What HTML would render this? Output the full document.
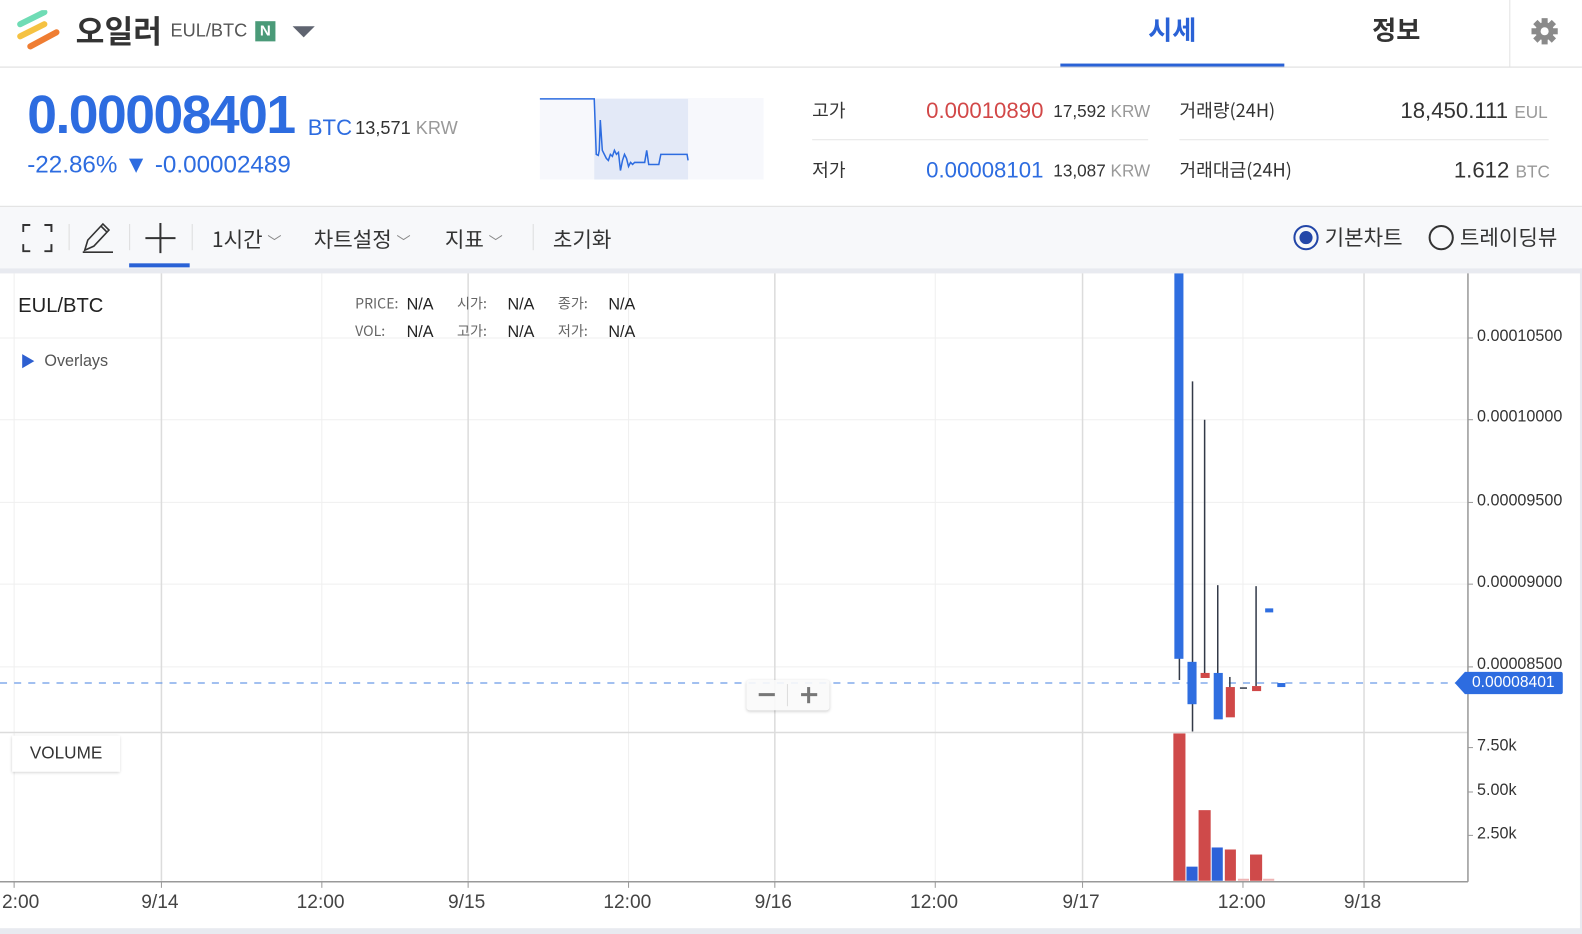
<!DOCTYPE html>
<html><head><meta charset="utf-8"><style>
*{margin:0;padding:0;box-sizing:border-box}
body{width:1582px;height:934px;overflow:hidden;background:#e8eaf0;font-family:"Liberation Sans","Noto Sans CJK KR",sans-serif;color:#333;position:relative}
#w{position:absolute;left:0;top:0;width:1568px;height:926px;transform:scale(1.0089);transform-origin:0 0;background:#fff}
.a{position:absolute;white-space:nowrap}
.k{font-family:"Noto Sans CJK KR","Liberation Sans",sans-serif}
</style></head><body><div id="w">
<svg class="a" style="left:14px;top:10px" width="48" height="44" viewBox="0 0 48 44">
<line x1="6" y1="14" x2="30" y2="2" stroke="#6fdcb5" stroke-width="6" stroke-linecap="round"/>
<line x1="6" y1="26" x2="30" y2="14" stroke="#f5c242" stroke-width="6" stroke-linecap="round"/>
<line x1="16" y1="36" x2="42" y2="22" stroke="#ef7d32" stroke-width="6" stroke-linecap="round"/>
</svg>
<div class="a k" style="left:75px;top:6px;font-size:31px;font-weight:bold;color:#333">오일러</div>
<div class="a" style="left:169px;top:20px;font-size:18px;color:#555">EUL/BTC</div>
<div class="a" style="left:253px;top:21px;width:20px;height:20px;background:#4a9a78;color:#fff;font-size:15px;font-weight:bold;text-align:center;line-height:20px">N</div>
<div class="a" style="left:290px;top:26px;width:0;height:0;border-left:11px solid transparent;border-right:11px solid transparent;border-top:11px solid #5f6470"></div>
<div class="a k" style="left:1138px;top:10px;font-size:26px;font-weight:bold;color:#2a62d6">시세</div>
<div class="a" style="left:1051px;top:63px;width:222px;height:4px;background:#2a62d6"></div>
<div class="a k" style="left:1360px;top:10px;font-size:26px;font-weight:bold;color:#333">정보</div>
<div class="a" style="left:1496px;top:0;width:1px;height:66px;background:#e2e2e2"></div>
<svg class="a" style="left:1517px;top:17px" width="28" height="28" viewBox="0 0 28 28"><g fill="#8a8a8a"><circle cx="14" cy="14" r="9"/><g><rect x="11" y="1" width="6" height="26"/><rect x="11" y="1" width="6" height="26" transform="rotate(45 14 14)"/><rect x="11" y="1" width="6" height="26" transform="rotate(90 14 14)"/><rect x="11" y="1" width="6" height="26" transform="rotate(135 14 14)"/></g></g><circle cx="14" cy="14" r="4" fill="#fff"/></svg>
<div class="a" style="left:0;top:66px;width:1568px;height:1px;background:#dcdcdc"></div>
<div class="a" style="left:27px;top:84px;font-size:53px;font-weight:bold;color:#2d6ce0;letter-spacing:-1.5px">0.00008401</div>
<div class="a" style="left:305px;top:114px;font-size:22px;color:#2d6ce0">BTC</div>
<div class="a" style="left:352px;top:117px;font-size:18px;color:#333">13,571 <span style="color:#999">KRW</span></div>
<div class="a" style="left:27px;top:150px;font-size:24px;color:#2d6ce0">-22.86% ▼ -0.00002489</div>
<svg class="a" style="left:535px;top:97px" width="222" height="81">
<rect width="222" height="81" fill="#f7f8fc"/>
<rect x="54" y="1" width="93" height="80" fill="#e3e9f7"/>
<polyline fill="none" stroke="#2d6ce0" stroke-width="1.5" points="0,1 54,1 56,56 58,57 59,52 60,22 62,52 66,60 68,62 70,56 72,58 74,52 76,56 78,54 80,72 82,62 84,56 86,60 88,68 90,64 92,66 94,64 104,64 106,52 108,66 118,66 120,56 136,56 146,56 147,62"/>
</svg>
<div class="a k" style="left:805px;top:96px;font-size:18px;color:#333">고가</div>
<div class="a" style="left:918px;top:97px;font-size:22px;color:#d24848">0.00010890</div>
<div class="a" style="left:1044px;top:101px;font-size:17px;color:#333">17,592 <span style="color:#999">KRW</span></div>
<div class="a" style="left:805px;top:138px;width:333px;height:1px;background:#e5e5e5"></div>
<div class="a k" style="left:805px;top:155px;font-size:18px;color:#333">저가</div>
<div class="a" style="left:918px;top:156px;font-size:22px;color:#2d6ce0">0.00008101</div>
<div class="a" style="left:1044px;top:160px;font-size:17px;color:#333">13,087 <span style="color:#999">KRW</span></div>
<div class="a k" style="left:1169px;top:96px;font-size:18px;color:#333">거래량(24H)</div>
<div class="a" style="left:1388px;top:97px;font-size:22px;color:#333">18,450.111 <span style="font-size:17px;color:#999">EUL</span></div>
<div class="a" style="left:1169px;top:138px;width:366px;height:1px;background:#e5e5e5"></div>
<div class="a k" style="left:1169px;top:155px;font-size:18px;color:#333">거래대금(24H)</div>
<div class="a" style="left:1441px;top:156px;font-size:22px;color:#333">1.612 <span style="font-size:17px;color:#999">BTC</span></div>
<div class="a" style="left:0;top:204px;width:1568px;height:62px;background:#f7f8fa;border-top:1px solid #e0e0e0"></div>
<svg class="a" style="left:22px;top:222px" width="30" height="28" fill="none" stroke="#333" stroke-width="2"><path d="M1 8V1h7M22 1h7v7M29 20v7h-7M8 27H1v-7"/></svg>
<div class="a" style="left:68px;top:222px;width:1px;height:26px;background:#ddd"></div>
<svg class="a" style="left:80px;top:218px" width="36" height="34" fill="none" stroke="#333" stroke-width="1.6"><path d="M4 30L7 20 22 4 28 10 13 26 4 30ZM20 6l6 6M2 32h30"/></svg>
<div class="a" style="left:128px;top:222px;width:1px;height:26px;background:#ddd"></div>
<svg class="a" style="left:144px;top:221px" width="30" height="30" stroke="#333" stroke-width="2"><path d="M15 0v30M0 15h30"/></svg>
<div class="a" style="left:128px;top:261px;width:60px;height:4px;background:#2a62d6"></div>
<div class="a" style="left:190px;top:222px;width:1px;height:26px;background:#ddd"></div>
<div class="a k" style="left:210px;top:222px;font-size:21px;color:#333">1시간 <span style="font-size:14px;color:#888">﹀</span></div>
<div class="a k" style="left:311px;top:222px;font-size:21px;color:#333">차트설정 <span style="font-size:14px;color:#888">﹀</span></div>
<div class="a k" style="left:441px;top:222px;font-size:21px;color:#333">지표 <span style="font-size:14px;color:#888">﹀</span></div>
<div class="a" style="left:528px;top:222px;width:1px;height:26px;background:#ddd"></div>
<div class="a k" style="left:548px;top:222px;font-size:21px;color:#333">초기화</div>
<div class="a" style="left:1282px;top:223px;width:25px;height:25px;border:2px solid #2346a8;border-radius:50%"></div>
<div class="a" style="left:1288px;top:229px;width:13px;height:13px;background:#2346a8;border-radius:50%"></div>
<div class="a k" style="left:1313px;top:220px;font-size:21px;color:#333">기본차트</div>
<div class="a" style="left:1416px;top:223px;width:25px;height:25px;border:2px solid #333;border-radius:50%"></div>
<div class="a k" style="left:1447px;top:220px;font-size:21px;color:#333">트레이딩뷰</div>
<div class="a" style="left:0;top:266px;width:1568px;height:5px;background:#e8eaf0"></div>
<div class="a" style="left:1566px;top:266px;width:2px;height:660px;background:#e8eaf0"></div>
<div class="a" style="left:0;top:920px;width:1568px;height:6px;background:#e8eaf0"></div>
<svg class="a" style="left:0;top:0" width="1566" height="920">
<g stroke="#efefef" stroke-width="1">
<line x1="0" y1="335" x2="1455" y2="335"/><line x1="0" y1="416" x2="1455" y2="416"/><line x1="0" y1="498" x2="1455" y2="498"/><line x1="0" y1="579" x2="1455" y2="579"/><line x1="0" y1="661" x2="1455" y2="661"/>
<line x1="14" y1="271" x2="14" y2="873"/><line x1="319" y1="271" x2="319" y2="873"/><line x1="623" y1="271" x2="623" y2="873"/><line x1="927" y1="271" x2="927" y2="873"/><line x1="1232" y1="271" x2="1232" y2="873"/>
</g>
<g stroke="#dcdcdc" stroke-width="1.5">
<line x1="160" y1="271" x2="160" y2="873"/><line x1="464" y1="271" x2="464" y2="873"/><line x1="768" y1="271" x2="768" y2="873"/><line x1="1073" y1="271" x2="1073" y2="873"/><line x1="1352" y1="271" x2="1352" y2="873"/>
<line x1="0" y1="726" x2="1455" y2="726"/>
</g>
<g stroke="#999" stroke-width="1.5"><line x1="1455" y1="271" x2="1455" y2="874"/><line x1="0" y1="874" x2="1455" y2="874"/></g>
<g stroke="#999" stroke-width="1"><line x1="1455" y1="335" x2="1460" y2="335"/><line x1="1455" y1="416" x2="1460" y2="416"/><line x1="1455" y1="498" x2="1460" y2="498"/><line x1="1455" y1="579" x2="1460" y2="579"/><line x1="1455" y1="661" x2="1460" y2="661"/><line x1="1455" y1="741" x2="1460" y2="741"/><line x1="1455" y1="785" x2="1460" y2="785"/><line x1="1455" y1="828" x2="1460" y2="828"/>
<line x1="14" y1="874" x2="14" y2="880"/><line x1="160" y1="874" x2="160" y2="880"/><line x1="319" y1="874" x2="319" y2="880"/><line x1="464" y1="874" x2="464" y2="880"/><line x1="623" y1="874" x2="623" y2="880"/><line x1="768" y1="874" x2="768" y2="880"/><line x1="927" y1="874" x2="927" y2="880"/><line x1="1073" y1="874" x2="1073" y2="880"/><line x1="1232" y1="874" x2="1232" y2="880"/><line x1="1352" y1="874" x2="1352" y2="880"/></g>
<line x1="0" y1="677" x2="1445" y2="677" stroke="#6b9be8" stroke-width="1.3" stroke-dasharray="7,7"/>
<g stroke="#333a48" stroke-width="1.5">
<line x1="1169" y1="640" x2="1169" y2="674"/><line x1="1182" y1="378" x2="1182" y2="725"/><line x1="1194" y1="416" x2="1194" y2="668"/><line x1="1207" y1="580" x2="1207" y2="668"/><line x1="1219" y1="671" x2="1219" y2="683"/><line x1="1229" y1="682" x2="1236" y2="682"/><line x1="1245" y1="581" x2="1245" y2="680"/></g>
<g fill="#2f6ee0"><rect x="1164" y="271" width="9" height="382"/><rect x="1177" y="656" width="9" height="42"/><rect x="1203" y="667" width="9" height="46"/><rect x="1254" y="603" width="8" height="4"/><rect x="1266" y="677" width="8" height="4"/></g>
<g fill="#d04848"><rect x="1190" y="667" width="9" height="5"/><rect x="1215" y="681" width="9" height="30"/><rect x="1241" y="680" width="9" height="5"/></g>
<g fill="#cf4a4a"><rect x="1163" y="727" width="12" height="146"/><rect x="1188" y="803" width="12" height="70"/><rect x="1214" y="842" width="11" height="31"/><rect x="1239" y="847" width="12" height="26"/></g>
<g fill="#2d62d8"><rect x="1176" y="859" width="11" height="14"/><rect x="1201" y="840" width="11" height="33"/></g>
<g fill="#eeb4b4"><rect x="1227" y="871" width="11" height="2"/><rect x="1252" y="871" width="11" height="2"/></g>
<path d="M1442 677 L1452 666 H1547 a2 2 0 0 1 2 2 V686 a2 2 0 0 1 -2 2 H1452 Z" fill="#2d6ce0"/>
</svg>
<div class="a" style="left:1459px;top:668px;font-size:15.5px;color:#fff">0.00008401</div>
<div class="a" style="left:1464px;top:325px;font-size:16px;color:#333">0.00010500</div>
<div class="a" style="left:1464px;top:405px;font-size:16px;color:#333">0.00010000</div>
<div class="a" style="left:1464px;top:488px;font-size:16px;color:#333">0.00009500</div>
<div class="a" style="left:1464px;top:569px;font-size:16px;color:#333">0.00009000</div>
<div class="a" style="left:1464px;top:650px;font-size:16px;color:#333;height:16px;overflow:hidden">0.00008500</div>
<div class="a" style="left:1464px;top:731px;font-size:16px;color:#333">7.50k</div>
<div class="a" style="left:1464px;top:775px;font-size:16px;color:#333">5.00k</div>
<div class="a" style="left:1464px;top:818px;font-size:16px;color:#333">2.50k</div>
<div class="a" style="left:2px;top:884px;font-size:19px;color:#444">2:00</div>
<div class="a" style="left:140px;top:884px;font-size:19px;color:#444">9/14</div>
<div class="a" style="left:294px;top:884px;font-size:19px;color:#444">12:00</div>
<div class="a" style="left:444px;top:884px;font-size:19px;color:#444">9/15</div>
<div class="a" style="left:598px;top:884px;font-size:19px;color:#444">12:00</div>
<div class="a" style="left:748px;top:884px;font-size:19px;color:#444">9/16</div>
<div class="a" style="left:902px;top:884px;font-size:19px;color:#444">12:00</div>
<div class="a" style="left:1053px;top:884px;font-size:19px;color:#444">9/17</div>
<div class="a" style="left:1207px;top:884px;font-size:19px;color:#444">12:00</div>
<div class="a" style="left:1332px;top:884px;font-size:19px;color:#444">9/18</div>
<div class="a" style="left:18px;top:292px;font-size:20px;color:#222">EUL/BTC</div>
<div class="a" style="left:22px;top:351px;width:0;height:0;border-top:7px solid transparent;border-bottom:7px solid transparent;border-left:12px solid #2d5fd0"></div>
<div class="a" style="left:44px;top:350px;font-size:16px;color:#555">Overlays</div>
<div class="a k" style="left:352px;top:288px;font-size:14px;color:#666;line-height:27px">PRICE:<br>VOL:</div>
<div class="a" style="left:403px;top:289px;font-size:16px;color:#222;line-height:27px">N/A<br>N/A</div>
<div class="a k" style="left:453px;top:288px;font-size:14px;color:#666;line-height:27px">시가:<br>고가:</div>
<div class="a" style="left:503px;top:289px;font-size:16px;color:#222;line-height:27px">N/A<br>N/A</div>
<div class="a k" style="left:553px;top:288px;font-size:14px;color:#666;line-height:27px">종가:<br>저가:</div>
<div class="a" style="left:603px;top:289px;font-size:16px;color:#222;line-height:27px">N/A<br>N/A</div>
<div class="a" style="left:12px;top:729px;width:107px;height:36px;background:#fff;box-shadow:0 1px 3px rgba(0,0,0,.2);font-size:17px;color:#333;text-align:center;line-height:36px">VOLUME</div>
<div class="a" style="left:740px;top:674px;width:82px;height:30px;background:rgba(250,250,250,.9);box-shadow:0 1px 3px rgba(0,0,0,.2);border-radius:3px"></div>
<div class="a" style="left:780px;top:678px;width:1px;height:22px;background:#ddd"></div>
<div class="a" style="left:752px;top:687px;width:16px;height:3px;background:#777"></div>
<div class="a" style="left:794px;top:687px;width:16px;height:3px;background:#777"></div>
<div class="a" style="left:800px;top:681px;width:3px;height:16px;background:#777"></div>
</div></body></html>
